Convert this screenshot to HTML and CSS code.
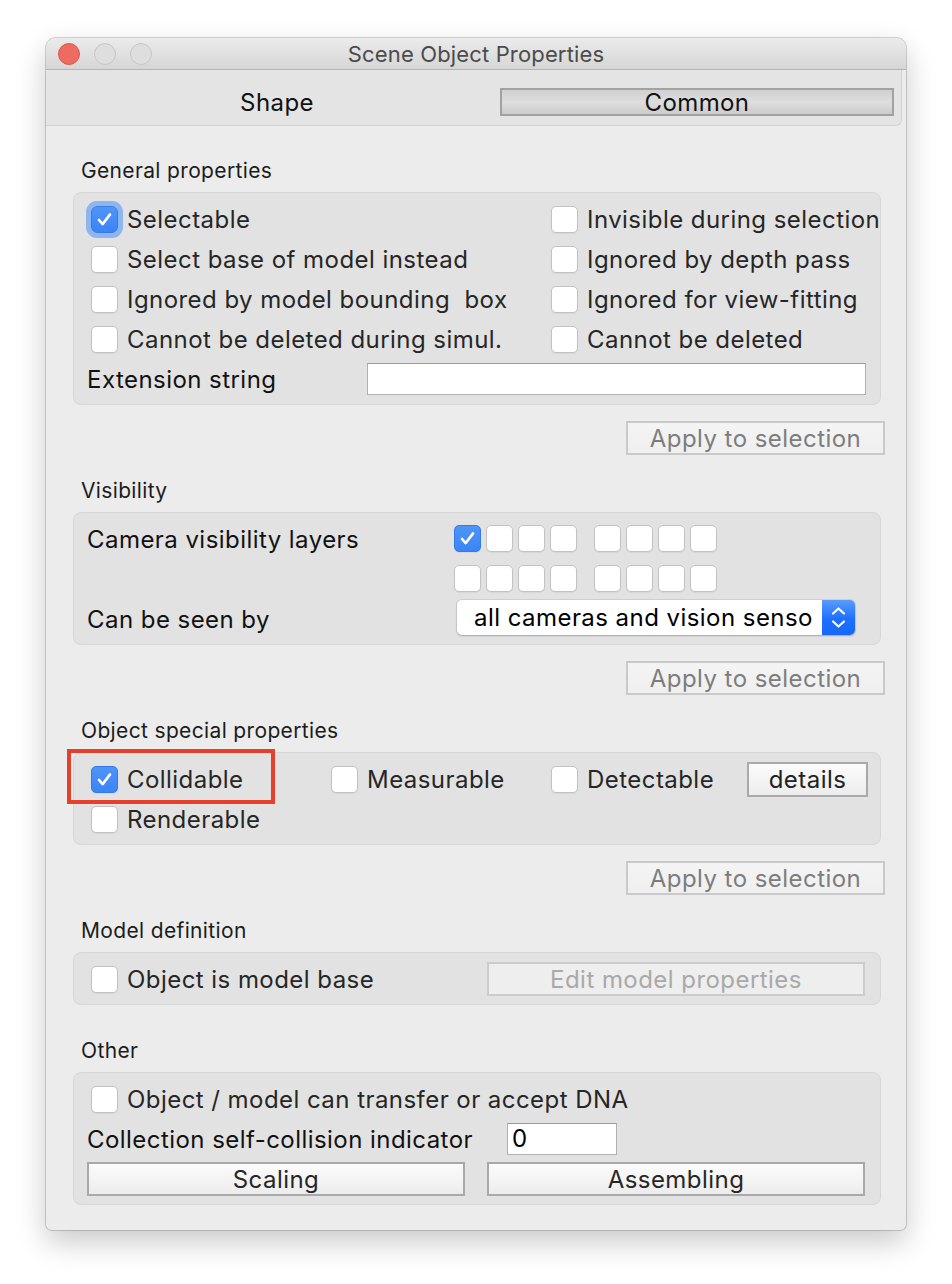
FILE: index.html
```html
<!DOCTYPE html>
<html>
<head>
<meta charset="utf-8">
<link rel="stylesheet" href="styles.css">
</head>
<body>
<div class="window">
  <div class="titlebar">
    <div class="lights"><span class="light red"></span><span class="light"></span><span class="light"></span></div>
    <div class="title">Scene Object Properties</div>
    <div></div>
  </div>
  <div class="tabs">
    <div class="tab">Shape</div>
    <div class="tab active">Common</div>
  </div>
  <div class="content">
    <div class="section-title">General properties</div>
    <div class="group">
      <div class="grid2">
        <label class="cb"><span class="box checked focus"><svg viewBox="0 0 27 27"><path d="M7.5 14 L11.5 18.5 L19.5 8"/></svg></span>Selectable</label>
        <label class="cb"><span class="box"></span>Invisible during selection</label>
        <label class="cb"><span class="box"></span>Select base of model instead</label>
        <label class="cb"><span class="box"></span>Ignored by depth pass</label>
        <label class="cb"><span class="box"></span>Ignored by model bounding&nbsp; box</label>
        <label class="cb"><span class="box"></span>Ignored for view-fitting</label>
        <label class="cb"><span class="box"></span>Cannot be deleted during simul.</label>
        <label class="cb"><span class="box"></span>Cannot be deleted</label>
      </div>
      <div class="ext-row">
        <span class="lbl ext-lbl">Extension string</span>
        <span class="input ext-input"></span>
      </div>
    </div>
    <div class="apply-row"><span class="btn disabled apply">Apply to selection</span></div>

    <div class="section-title">Visibility</div>
    <div class="group vis">
      <span class="lbl">Camera visibility layers</span>
      <div class="layers">
        <div class="lg"><span class="box checked"><svg viewBox="0 0 27 27"><path d="M7.5 14 L11.5 18.5 L19.5 8"/></svg></span><span class="box"></span><span class="box"></span><span class="box"></span></div>
        <div class="lg"><span class="box"></span><span class="box"></span><span class="box"></span><span class="box"></span></div>
      </div>
      <span></span>
      <div class="layers">
        <div class="lg"><span class="box"></span><span class="box"></span><span class="box"></span><span class="box"></span></div>
        <div class="lg"><span class="box"></span><span class="box"></span><span class="box"></span><span class="box"></span></div>
      </div>
      <span class="lbl">Can be seen by</span>
      <div class="select">
        <span class="select-text">all cameras and vision senso</span>
        <span class="select-arrow"><svg viewBox="0 0 33 35"><path d="M11 13.5 L16.5 8.5 L22 13.5 M11 21.5 L16.5 26.5 L22 21.5"/></svg></span>
      </div>
    </div>
    <div class="apply-row"><span class="btn disabled apply">Apply to selection</span></div>

    <div class="section-title">Object special properties</div>
    <div class="group special">
      <div class="special-grid">
        <label class="cb"><span class="box checked"><svg viewBox="0 0 27 27"><path d="M7.5 14 L11.5 18.5 L19.5 8"/></svg></span>Collidable</label>
        <label class="cb"><span class="box"></span>Measurable</label>
        <label class="cb"><span class="box"></span>Detectable</label>
        <span class="btn details">details</span>
        <label class="cb"><span class="box"></span>Renderable</label>
      </div>
      <div class="highlight"></div>
    </div>
    <div class="apply-row"><span class="btn disabled apply">Apply to selection</span></div>

    <div class="section-title">Model definition</div>
    <div class="group model">
      <label class="cb"><span class="box"></span>Object is model base</label>
      <span class="btn disabled faint wide">Edit model properties</span>
    </div>

    <div class="section-title other-title">Other</div>
    <div class="group other">
      <label class="cb full"><span class="box"></span>Object / model can transfer or accept DNA</label>
      <span class="lbl">Collection self-collision indicator</span>
      <span class="input small-input">0</span>
      <span class="btn wide strong">Scaling</span>
      <span class="btn wide strong">Assembling</span>
    </div>
  </div>
</div>
</body>
</html>
```
FILE: styles.css
```css
* { box-sizing: border-box; }
html, body { margin: 0; padding: 0; background: #ffffff; }
body {
  font-family: "Inter", "Roboto", "Liberation Sans", sans-serif;
  color: #262626;
  padding: 38px 0 0 46px;
  height: 1284px;
}
.window {
  width: 860px;
  height: 1192px;
  background: #ececec;
  border-radius: 10px 10px 6px 6px;
  box-shadow: 0 0 0 1px rgba(0,0,0,0.16), 0 12px 30px rgba(0,0,0,0.22);
  overflow: hidden;
}
.titlebar {
  height: 32px;
  display: grid;
  grid-template-columns: 1fr auto 1fr;
  align-items: center;
  background: linear-gradient(#ebebeb, #d6d6d6);
  border-bottom: 1px solid #b4b4b4;
}
.lights { display: flex; gap: 14px; padding-left: 12px; }
.light {
  width: 22px; height: 22px; border-radius: 50%;
  background: #dedede;
  border: 1px solid #c5c5c5;
}
.light.red { background: #ee6b60; border-color: #d8584d; }
.title {
  font-size: 22px;
  color: #4b4b4b;
  letter-spacing: 0.15px;
}
.tabs {
  width: 856px;
  height: 56px;
  background: #e4e4e4;
  border-bottom: 1px solid #d2d2d2;
  border-right: 1px solid #d2d2d2;
  border-bottom-right-radius: 6px;
  display: grid;
  grid-template-columns: 446px 394px;
  padding: 18px 0 0 8px;
}
.tab {
  height: 28px;
  line-height: 29px;
  font-size: 24px;
  letter-spacing: 0.4px;
  color: #111;
  text-align: center;
}
.tab.active {
  background: linear-gradient(#d0d0d0, #dedede 50%, #cbcbcb);
  border: 2px solid #a2a2a2;
  line-height: 25px;
}
.content { padding: 33px 0 0 27px; }
.section-title {
  height: 24px;
  line-height: 24px;
  font-size: 21px;
  letter-spacing: 0.35px;
  color: #1c1c1c;
  padding-left: 8px;
  margin-bottom: 9px;
}
.other-title { margin-top: 34px; }
.group {
  width: 808px;
  background: #e2e2e2;
  border: 1px solid #d6d6d6;
  border-radius: 8px;
  padding: 6px 0 5px 0;
  position: relative;
}
.grid2 {
  display: grid;
  grid-template-columns: 460px 1fr;
  padding-left: 17px;
}
.cb {
  height: 40px;
  display: flex;
  align-items: center;
  gap: 9px;
  font-size: 24px;
  letter-spacing: 0.45px;
  color: #262626;
  white-space: nowrap;
}
.box {
  width: 27px; height: 27px;
  flex: none;
  background: #ffffff;
  border: 1px solid #c2c2c2;
  border-radius: 5px;
  box-shadow: 0 1px 1px rgba(0,0,0,0.05);
  display: inline-block;
}
.box.checked {
  background: linear-gradient(#4f95f8, #3a84f6);
  border-color: #3479e6;
}
.box.focus { box-shadow: 0 0 0 5px #8db5ef; border-radius: 6px; }
.box svg { width: 100%; height: 100%; display: block; }
.box svg path { fill: none; stroke: #ffffff; stroke-width: 2.8; stroke-linecap: round; stroke-linejoin: round; }
.lbl { font-size: 24px; letter-spacing: 0.45px; color: #111; white-space: nowrap; }
.ext-row {
  height: 40px;
  display: flex;
  align-items: center;
  padding-left: 13px;
}
.ext-lbl { width: 280px; flex: none; }
.input {
  display: block;
  background: #fff;
  border: 1px solid #b0b0b0;
  border-top-color: #9a9a9a;
  height: 32px;
}
.ext-input { width: 499px; }
.apply-row {
  width: 812px;
  display: flex;
  justify-content: flex-end;
  margin: 16px 0 24px 0;
}
.btn {
  display: flex;
  align-items: center;
  justify-content: center;
  height: 34px;
  font-size: 24px;
  letter-spacing: 0.45px;
  color: #222;
  background: linear-gradient(#fbfbfb, #f4f4f4 50%, #ececec);
  border: 2px solid #a9a9a9;
  white-space: nowrap;
}
.btn.disabled { color: #7d7d7d; border-color: #c9c9c9; background: linear-gradient(#f4f4f4, #efefef); }
.btn.faint { color: #a9a9a9; border-color: #cccccc; background: #eeeeee; }
.apply { width: 259px; }

.vis {
  display: grid;
  grid-template-columns: 367px 1fr;
  grid-template-rows: 40px 40px 40px;
  align-items: center;
  padding-left: 13px;
}
.layers { display: flex; gap: 17px; margin-top: -2px; }
.lg { display: flex; gap: 5px; }
.select {
  margin-left: 3px;
  margin-top: -4px;
  width: 398px;
  height: 35px;
  display: flex;
  background: #fff;
  border-radius: 5px;
  box-shadow: 0 0 0 1px rgba(0,0,0,0.08), 0 1px 2px rgba(0,0,0,0.2);
  overflow: hidden;
}
.select-text {
  flex: 1;
  font-size: 24px;
  letter-spacing: 0.45px;
  color: #000;
  line-height: 35px;
  padding-left: 17px;
  white-space: nowrap;
  overflow: hidden;
}
.select-arrow {
  width: 33px;
  flex: none;
  background: linear-gradient(#5a9cfb, #1e6ffe 55%, #1767fa);
}
.select-arrow svg { display: block; width: 33px; height: 35px; }
.select-arrow path { fill: none; stroke: #fff; stroke-width: 2.2; stroke-linecap: round; stroke-linejoin: round; }

.special-grid {
  display: grid;
  grid-template-columns: 240px 220px 196px 121px;
  padding-left: 17px;
  align-items: center;
}
.details { height: 35px; }
.highlight {
  position: absolute;
  left: -7px;
  top: -4px;
  width: 208px;
  height: 55px;
  border: 4px solid #e5402c;
}
.model {
  display: grid;
  grid-template-columns: 396px 378px;
  align-items: center;
  padding-left: 17px;
}
.wide { width: 378px; }
.other {
  display: grid;
  grid-template-columns: 378px 378px;
  grid-template-rows: 40px 40px 40px;
  column-gap: 22px;
  align-items: center;
  padding-left: 13px;
}
.other .full { grid-column: 1 / 3; padding-left: 4px; }
.small-input {
  width: 110px;
  margin-left: 20px;
  font-size: 24px;
  color: #000;
  line-height: 30px;
  padding-left: 4px;
}
.strong { color: #262626; }
```
